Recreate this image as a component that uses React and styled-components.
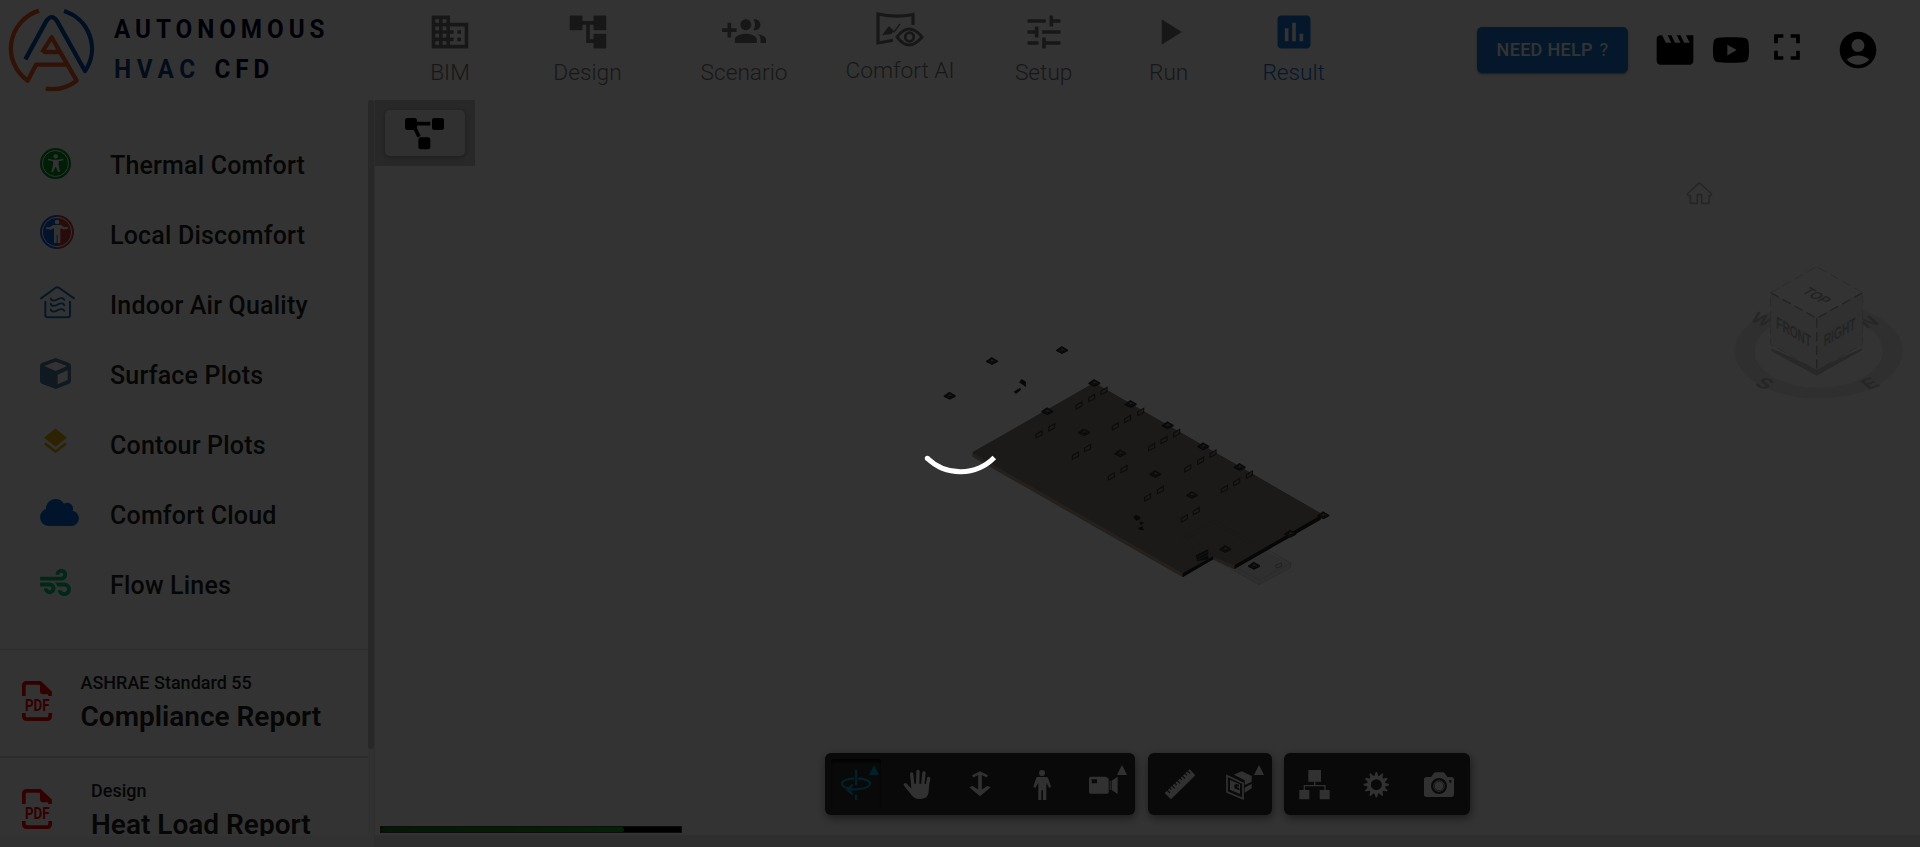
import React from "react";
import styled, { createGlobalStyle } from "styled-components";
import {
  MdBusiness, MdAccountTree, MdTune, MdPlayArrow, MdAssessment,
  MdMovie, MdFullscreen, MdAccountCircle, MdLayers,
} from "react-icons/md";
import { FaYoutube, FaCloud, FaWind } from "react-icons/fa";

const GlobalStyle = createGlobalStyle`
  * { box-sizing: border-box; }
  html, body { margin: 0; height: 100%; overflow: hidden; background: #fff; }
  body { font-family: Roboto, "Liberation Sans", sans-serif; color: #212121; }
  svg { display: block; flex: none; overflow: visible; }
`;

const Page = styled.div`
  width: 1920px;
  height: 847px;
  display: flex;
  flex-direction: column;
  background: #fff;
  overflow: hidden;
`;

/* ---------- header ---------- */
const Header = styled.header`
  height: 100px;
  flex: none;
  display: flex;
`;
const Brand = styled.div`
  width: 381.25px;
  flex: none;
  display: flex;
  padding: 8px 0 0 8px;
`;
const BrandText = styled.div`
  margin-left: 19px;
  padding-top: 1px;
  display: flex;
  flex-direction: column;
  font-size: 25.5px;
  font-weight: 700;
  line-height: 40px;
  letter-spacing: 5.2px;
  color: #00002c;
  white-space: nowrap;
`;
const BrandLine = styled.div`
  height: 40px;
  transform-origin: left;
  transform: scaleX(0.95);
`;
const BrandBlue = styled.span`
  color: #103c80;
  letter-spacing: 6px;
  margin-right: 3px;
`;
const Nav = styled.nav`
  display: flex;
  flex: 1;
`;
const NavItem = styled.div`
  width: ${(p) => p.$w}px;
  flex: none;
  display: flex;
  flex-direction: column;
  align-items: center;
  gap: ${(p) => (p.$raised ? 10 : 5)}px;
  padding-top: ${(p) => (p.$raised ? 12 : 10)}px;
  color: ${(p) => (p.$active ? "#1976d2" : "#757575")};
`;
const NavLabel = styled.span`
  font-size: 22.7px;
  font-weight: 350;
  line-height: 28px;
  white-space: nowrap;
`;
const Actions = styled.div`
  width: 443px;
  flex: none;
  display: flex;
  align-items: flex-start;
`;
const HelpButton = styled.button`
  margin-top: 27px;
  width: 151px;
  height: 46px;
  border: 0;
  border-radius: 5px;
  background: #1976d2;
  color: #fff;
  font: 500 18px/46px Roboto, sans-serif;
  letter-spacing: 0.3px;
  padding: 0;
  white-space: nowrap;
  box-shadow: 0 3px 1px -2px rgba(0,0,0,.2), 0 2px 2px rgba(0,0,0,.14), 0 1px 5px rgba(0,0,0,.12);
`;
const HelpMark = styled.span`
  font-weight: 400;
  margin-left: 2px;
`;
const ActionIcon = styled.span`
  margin: ${(p) => p.$top}px 0 0 ${(p) => p.$gap}px;
  color: #000;
`;

/* ---------- body ---------- */
const Body = styled.div`
  display: flex;
  flex: 1;
  min-height: 0;
`;
const Side = styled.aside`
  width: 375px;
  flex: none;
  display: flex;
  flex-direction: column;
  border-right: 1px solid #e4e4e4;
  background: #f5f5f5;
`;
const SideScroll = styled.div`
  height: 736px;
  display: flex;
  overflow: hidden;
  background: #fff;
`;
const SideContent = styled.div`
  width: 368px;
  flex: none;
`;
const ScrollTrack = styled.div`
  width: 6px;
  background: #f5f5f5;
`;
const ScrollThumb = styled.div`
  height: 649px;
  border-radius: 3px;
  background: #c8c8c8;
`;
const Menu = styled.div`
  height: 550px;
  padding-top: 30px;
  border-bottom: 1px solid #dcdcdc;
`;
const MenuRow = styled.div`
  height: 70px;
  display: flex;
  align-items: center;
  padding-left: 40px;
`;
const MenuIcon = styled.span`
  width: 70px;
  flex: none;
  padding-bottom: ${(p) => p.$lift}px;
  color: ${(p) => p.$color};
`;
const MenuLabel = styled.span`
  font-size: 25px;
  font-weight: 500;
  letter-spacing: 0.19px;
  line-height: 30px;
  padding-top: 1px;
  white-space: nowrap;
`;
const CloudIcon = styled(FaCloud)`
  width: 39px;
  height: 31px;
`;
const Report = styled.div`
  height: 108px;
  display: flex;
  padding: 0 0 0 22px;
  border-bottom: 2px solid #dcdcdc;
`;
const ReportIcon = styled.span`
  width: ${(p) => p.$w}px;
  flex: none;
  padding-top: 31px;
`;
const ReportText = styled.div`
  padding-top: 21px;
  white-space: nowrap;
`;
const ReportKind = styled.div`
  font-size: 18px;
  font-weight: 500;
  line-height: 24px;
`;
const ReportName = styled.div`
  font-size: 28px;
  font-weight: 600;
  line-height: 36px;
  margin-top: 4px;
`;

/* ---------- viewer ---------- */
const Viewer = styled.main`
  flex: 1;
  display: flex;
  flex-direction: column;
  background: #e4e4e4;
`;
const Stage = styled.div`
  position: relative;
  height: 735px;
  background: #fff;
`;
const TreePanel = styled.div`
  width: 100px;
  height: 66px;
  padding: 10px;
  background: #c6c6c6;
`;
const TreeButton = styled.div`
  width: 80px;
  height: 46px;
  padding: 8px 0 0 20px;
  border-radius: 5px;
  background: #f0f0f0;
  box-shadow: 0 1px 4px rgba(0,0,0,.3);
`;
const Placed = styled.div`
  position: absolute;
  left: ${(p) => p.$x}px;
  top: ${(p) => p.$y}px;
`;
const Toolbar = styled.div`
  position: absolute;
  left: 450px;
  top: 653px;
  display: flex;
  gap: 12.5px;
`;
const ToolGroup = styled.div`
  display: flex;
  height: 62px;
  border-radius: 6px;
  background: #2f2f2f;
  box-shadow: 1px 3px 10px rgba(0,0,0,.5);
`;
const ToolButton = styled.div`
  position: relative;
  width: 62px;
  height: 62px;
  padding-top: 2px;
  display: flex;
  align-items: center;
  justify-content: center;
  color: ${(p) => (p.$active ? "#00a5dc" : "#f4f4f4")};
`;
const ActiveWell = styled.div`
  position: absolute;
  inset: 6px;
  border-radius: 3px;
  box-shadow: inset 0 3px 3px #0c0c0c;
`;
const Caret = styled.span`
  position: absolute;
  right: 8px;
  top: 12px;
  border: 5px solid transparent;
  border-top: 0;
  border-bottom: 10px solid currentColor;
`;
const Progress = styled.div`
  position: absolute;
  left: 5px;
  top: 726px;
  width: 302px;
  height: 7px;
  border: 1px solid #444;
  background: #000;
`;
const ProgressFill = styled.div`
  width: 243px;
  height: 5px;
  border-radius: 3px;
  background: linear-gradient(90deg, #107a14, #14a81c);
`;

/* ---------- loading layer ---------- */
const Backdrop = styled.div`
  position: fixed;
  inset: 0;
  display: flex;
  align-items: center;
  justify-content: center;
  background: rgba(0,0,0,.8);
`;

const Spinner = () => (
  <svg width="100" height="100" viewBox="0 0 100 100" fill="none">
    <path d="M17.300 84.200A47.500 47.500 0 0 0 84.300 83.500" stroke="#fff" strokeWidth="5" />
    <circle cx="17.300" cy="84.200" r="2.500" fill="#fff" />
  </svg>
);

const Logo = () => (
  <svg width="87" height="84" viewBox="24 24 261 252" fill="none" strokeWidth="13" strokeLinejoin="round">
    <path stroke="#f05a1e" d="M117 32A121 119 0 0 0 83 242L108 194H198M126 157L155 112L230 242A121 119 0 0 1 137 266M130 156H176" />
    <path stroke="#0050a8" d="M76 178L138 65Q155 38 172 65L255 213A121 119 0 0 0 192 33" />
  </svg>
);

const GroupIcon = () => (
  <svg width="44" height="44" viewBox="0 0 24 24" fill="currentColor">
    <path d="M8 10H5V7H3v3H0v2h3v3h2v-3h3v-2zm10 1c1.660 0 2.990-1.340 2.990-3S19.660 5 18 5c-.32 0-.63.05-.91.14.57.81.9 1.790.9 2.860s-.34 2.040-.9 2.860c.28.09.59.14.91.14zm-5 0c1.660 0 2.990-1.340 2.990-3S14.660 5 13 5c-1.660 0-3 1.340-3 3s1.340 3 3 3zm6.620 2.160c.83.73 1.380 1.660 1.380 2.840v2h3v-2c0-1.540-2.370-2.490-4.380-2.840zM13 13c-2 0-6 1-6 3v2h12v-2c0-2-4-3-6-3z" />
  </svg>
);

const ComfortIcon = () => (
  <svg width="48" height="35" viewBox="0 0 48 35" fill="none" stroke="currentColor" strokeWidth="3.200">
    <path d="M37 13V2.500Q20 6 2 2V31Q9 30 17 28.300" />
    <path d="M7 23L13 15L18 20L24 12" strokeWidth="1.300" />
    <path d="M7 23L13 15L17 19L16 22Z" fill="currentColor" stroke="none" />
    <path d="M21 25Q33 9 46 25Q33 41 21 25Z" strokeWidth="3" />
    <circle cx="33.500" cy="25" r="4.300" strokeWidth="2.800" />
  </svg>
);

const ThermalIcon = () => (
  <svg width="31" height="31" viewBox="0 0 93 93">
    <circle cx="46.500" cy="46.500" r="46.500" fill="#00901c" />
    <circle cx="46.500" cy="46.500" r="39" fill="none" stroke="#fff" strokeWidth="3" />
    <circle cx="47" cy="25" r="6.500" fill="#fff" />
    <path fill="#fff" d="M24 32L40 35H54L70 32V37L56 40V52L60 72H54L48 57H46L39 72H34L39 52V40L24 37Z" />
  </svg>
);
const LocalIcon = () => (
  <svg width="34" height="34" viewBox="0 0 102 102">
    <path d="M51 0A51 51 0 0 0 51 102Z" fill="#1060dc" />
    <path d="M51 0A51 51 0 0 1 51 102Z" fill="#c83a40" />
    <circle cx="51" cy="51" r="44" fill="none" stroke="#fff" strokeWidth="3" />
    <circle cx="51" cy="21" r="7" fill="#fff" />
    <path fill="#fff" d="M39 30H63L72 37L84 36V41L70 43L61 40V84H53V60H50V84H42V40L32 44L18 41V37L30 37Z" />
  </svg>
);
const AirIcon = () => (
  <svg width="35" height="33" viewBox="0 0 105 99" fill="none" stroke="#1272c8" strokeWidth="6" strokeLinecap="round" strokeLinejoin="round">
    <path d="M3 37L46 6Q52 1 58 6L102 37M16 47V87Q16 94 23 94H83Q90 94 90 87V47" />
    <path strokeWidth="5.500" d="M32 37C35 48 48 43 54 39C64 34 71 36 73 42M32 53C35 64 48 59 54 55C64 50 71 52 73 58M32 70C35 81 48 76 54 72C64 67 71 69 73 75" />
  </svg>
);
const CubeIcon = () => (
  <svg width="31" height="31" viewBox="0 0 93 93">
    <path fillRule="evenodd" fill="#587ca2" d="M47 0L88 15Q93 18 93 24V68Q93 74 88 77L47 93L5 77Q0 74 0 68V24Q0 18 5 15ZM47 11L13 24L47 39L81 24ZM83 37L53 50V79L83 66Z" />
  </svg>
);
const PdfIcon = () => (
  <svg width="30" height="40" viewBox="0 0 90 120" fill="none" stroke="#ff0000" strokeWidth="11">
    <path d="M5.500 45V15Q5.500 5.500 15 5.500H54L84 34V45M5.500 96V105Q5.500 114.500 15 114.500H75Q84.500 114.500 84.500 105V96" />
    <path d="M54 3L88 36V40H63Q54 40 54 31Z" fill="#ff0000" stroke="none" />
    <text x="9" y="90" fontSize="50" fontWeight="700" fill="#ff0000" stroke="none" textLength="74" lengthAdjust="spacingAndGlyphs" fontFamily="Roboto, sans-serif">PDF</text>
  </svg>
);
const TreeIcon = () => (
  <svg width="39" height="32" viewBox="0 0 117 96">
    <path d="M20 17H76M26 22L42 56" stroke="#000" strokeWidth="11" />
    <rect width="36" height="36" rx="7" y="0" />
    <rect width="36" height="36" rx="7" x="81" y="0" />
    <rect width="36" height="36" rx="7" x="40" y="58" />
  </svg>
);

const edgeTiles = [[486, 60], [276, 93], [149, 197], [442, 244], [583, 159], [692, 222], [803, 286], [910, 349], [1019, 411], [1270, 556], [1062, 707], [1171, 611]];
const floorTiles = [[552, 307], [661, 370], [766, 432], [876, 495], [976, 657]];
const vents = [[612, 183], [575, 204], [537, 226], [455, 292], [417, 313], [722, 246], [683, 267], [646, 289], [563, 354], [526, 377], [830, 309], [792, 330], [755, 351], [672, 417], [634, 439], [939, 371], [902, 392], [863, 415], [781, 480], [743, 502], [1048, 434], [1010, 456], [973, 477], [889, 543], [853, 565]];

const Tile = ({ x, y, fill }) => (
  <g>
    <path d={`M${x - 18} ${y}L${x - 1} ${y - 12}L${x + 18} ${y - 1}V${y + 3}L${x} ${y + 12}L${x - 18} ${y + 3}Z`} fill={fill} />
    <path d={`M${x - 10} ${y}L${x} ${y - 6}L${x + 11} ${y}L${x} ${y + 7}Z`} fill="#666462" />
    <path d={`M${x - 7} ${y - 1}h6v5M${x} ${y + 3}h6`} stroke="#181818" fill="none" strokeWidth="3" />
    <path d={`M${x - 3} ${y - 1}h5`} stroke="#b8b8b8" strokeWidth="3" />
  </g>
);

const Model = () => (
  <svg width="450" height="270" viewBox="0 0 1350 810">
    <path fill="#8c8074" d="M218 368L583 158L1270 555V562L1003 717L940 688L848 741L218 380Z" />
    <path fill="#b4a292" d="M218 369L848 729V741L218 380Z" />
    <path fill="#8b837b" d="M218 366L583 158L1270 554L1003 706L940 678L848 730Z" />
    <path fill="#202020" d="M848 730L940 678V688L848 742ZM1003 706L1262 556V569L1003 718Z" />
    <path fill="#aaa097" d="M940 680L1003 706V718L940 688Z" />
    <path fill="#c0c0c0" fillOpacity=".3" d="M1003 718L1096 664L1172 698V712L1078 764L1003 722Z" />
    <path fill="none" stroke="#555" strokeOpacity=".35" strokeWidth="2" d="M848 624L940 569L1172 698V712L1078 764L940 688M848 624V636L900 664M858 628L940 580L1090 664" />
    <path fill="none" stroke="#888" strokeOpacity=".4" strokeWidth="2" d="M1010 714L1078 750L1172 700M1078 750V764" />
    {vents.map(([x, y]) => (
      <path key={`${x}-${y}`} d={`M${x - 9} ${y}L${x + 9} ${y - 11}V${y + 2}L${x - 9} ${y + 11}Z`} fill="none" stroke="#3a3836" strokeWidth="3.500" />
    ))}
    {edgeTiles.map(([x, y]) => <Tile key={`${x}-${y}`} x={x} y={y} fill="#2b2b2b" />)}
    {floorTiles.map(([x, y]) => <Tile key={`${x}-${y}`} x={x} y={y} fill="#383736" />)}
    <g fill="#292929">
      <path d="M357 157L365 147L378 155V172L368 164Z" />
      <path d="M341 185L361 173L363 179L348 192Z" />
      <path d="M700 560L708 554L721 560V568L708 572ZM718 579L725 574L731 579L724 586ZM713 594L728 589L731 601L720 600Z" />
      <path d="M887 676L925 657V688L891 694Z" />
    </g>
    <path d="M890 682L928 663M893 689L928 673" stroke="#808080" strokeWidth="2" />
    <path d="M890 641L907 634V646L895 652ZM1127 705L1144 699V710L1130 714Z" fill="none" stroke="#777" strokeWidth="2" />
  </svg>
);

const ViewCube = () => (
  <svg width="180" height="145" viewBox="210 310 540 435" fontFamily='"Liberation Sans", sans-serif' fontWeight="700">
    <path fillRule="evenodd" fill="#ebebeb" d="M223 574A253 143 0 1 0 729 574A253 143 0 1 0 223 574ZM284 574A192 110 0 1 1 668 574A192 110 0 1 1 284 574Z" />
    <g fill="#bcbcbc" fontSize="64" textAnchor="middle">
      <text transform="matrix(.8 .35 -.6 .6 292 492)">W</text>
      <text transform="matrix(.87 -.35 .65 .6 640 500)">N</text>
      <text transform="matrix(.87 .35 -.65 .6 300 684)">S</text>
      <text transform="matrix(.87 -.35 .65 .6 644 684)">E</text>
    </g>
    <path fill="#c6c6c6" d="M334 566L470 628L606 566V572L470 648L334 574Z" />
    <path fill="#fcfcfc" d="M470 321L608 399L470 476L332 399Z" />
    <path fill="#f3f3f3" d="M332 399L470 476V632L332 554Z" />
    <path fill="#efefef" d="M608 399L470 476V632L608 554Z" />
    <path fill="none" stroke="#acacac" strokeWidth="4" strokeDasharray="28 13" d="M332 399L470 476L608 399M470 476V632" />
    <path fill="none" stroke="#c8c8c8" strokeWidth="2.500" strokeDasharray="28 13" d="M332 399L470 321L608 399V554L470 632L332 554V399" />
    <g fill="#b0b0b0" textAnchor="middle">
      <text fontSize="52" textLength="86" lengthAdjust="spacingAndGlyphs" transform="matrix(.78 .44 -.75 .43 457 416)">TOP</text>
      <text fontSize="50" textLength="120" lengthAdjust="spacingAndGlyphs" transform="matrix(.87 .49 0 1 401 534)">FRONT</text>
      <text fontSize="50" textLength="110" lengthAdjust="spacingAndGlyphs" transform="matrix(.87 -.49 0 1 539 534)">RIGHT</text>
    </g>
  </svg>
);
const HomeIcon = () => (
  <svg width="27" height="23" viewBox="0 0 81 69" fill="none" stroke="#bababa" strokeWidth="5" strokeLinejoin="round">
    <path d="M13 41H7L4 36L37 5Q40 2 43 5L77 36L74 41H69V64H47V38H34V64H13Z" />
  </svg>
);

/* viewer tool icons, each on a 102-unit square */
const Tool = ({ children }) => (
  <svg width="34" height="34" viewBox="0 0 102 102" fill="currentColor">{children}</svg>
);
const OrbitIcon = () => (
  <Tool>
    <path fill="none" stroke="currentColor" strokeWidth="6.500" d="M51 5V51M51 80V96M38 62C20 60 9 55 9 47C9 38 28 32 45 32M57 32C75 32 93 38 93 47C93 58 72 64 27 65M41 50L25 65L41 79" />
  </Tool>
);
const HandIcon = () => (
  <Tool>
    <g fill="none" stroke="currentColor" strokeWidth="10" strokeLinecap="round">
      <path d="M36 56L32 18M50 52L51 10M65 52L69 15M78 58L83 31M28 68L13 50" />
    </g>
    <path d="M31 47L83 48C86 84 78 93 55 93C36 93 29 78 17 60L26 56L32 62Z" />
  </Tool>
);
const ZoomIcon = () => (
  <Tool>
    <path fill="none" stroke="currentColor" strokeWidth="8" d="M29 25L51 14L73 25" />
    <path fill="none" stroke="currentColor" strokeWidth="11" d="M51 15V71" />
    <path d="M19 58L29 54L51 68L73 54L83 58L51 85Z" />
  </Tool>
);
const PersonIcon = () => (
  <Tool>
    <circle cx="51" cy="15" r="9" />
    <path d="M37 27H65Q69 28 70 32L78 56L73 60L64 44V96H54V67H49V96H40V44L31 60L25 56L33 32Q34 28 37 27Z" />
  </Tool>
);
const VideoIcon = () => (
  <Tool>
    <path fillRule="evenodd" d="M11 26H55Q63 27 65 33V72Q65 77 60 77H11Q6 77 6 72V31Q6 26 11 26ZM14 34V46H30V34ZM68 38H71V66H68ZM74 38L92 26V78L74 66Z" />
  </Tool>
);
const RulerIcon = () => (
  <Tool>
    <path d="M8 75L83 4L100 22L27 94Z" />
    <path stroke="#2f2f2f" strokeWidth="3.500" d="M15 66L24 75M22 59L28 65M30 52L38 61M38 45L44 51M45 37L54 46M54 30L60 36M61 23L69 32M69 16L75 22M76 9L85 17" />
  </Tool>
);
const SectionIcon = () => (
  <Tool>
    <path fill="none" stroke="currentColor" strokeWidth="5" d="M9 23L57 46V92L9 72Z" />
    <path d="M30 20L53 10L83 24V41L62 51V37ZM62 59L83 47V61L62 74Z" />
    <path fillRule="evenodd" d="M18 36L48 49V78L18 65ZM31 50V61L46 67V61L40 58V54L45 56V50L38 48Z" />
  </Tool>
);
const HierarchyIcon = () => (
  <Tool>
    <path d="M31 6H69V41H31ZM4 66H34V94H4ZM65 66H95V94H65Z" />
    <path fill="none" stroke="currentColor" strokeWidth="4" d="M50 40V53M19 67V53H81V67" />
  </Tool>
);
const GearIcon = () => (
  <Tool>
    <circle cx="49" cy="50" r="22" fill="none" stroke="currentColor" strokeWidth="11" />
    {Array.from({ length: 12 }, (_, i) => (
      <path key={i} transform={`rotate(${i * 30} 49 50)`} d="M43 25L47 12H51L55 25Z" />
    ))}
  </Tool>
);
const CameraIcon = () => (
  <Tool>
    <path fillRule="evenodd" d="M14 27H27L36 15Q38 13 41 13H63Q66 13 68 16L76 27H88Q96 27 96 35V79Q96 87 88 87H14Q6 87 6 79V35Q6 27 14 27ZM51 30A24 24 0 1 0 51 78A24 24 0 1 0 51 30ZM85 36A4 4 0 1 0 85 44A4 4 0 1 0 85 36Z" />
    <circle cx="51" cy="54" r="17" />
    <circle cx="51" cy="54" r="14" fill="none" stroke="#777" strokeWidth="3" />
  </Tool>
);

const navItems = [
  { label: "BIM", w: 137.5, icon: MdBusiness },
  { label: "Design", w: 137.5, icon: MdAccountTree },
  { label: "Scenario", w: 175.5, icon: GroupIcon },
  { label: "Comfort AI", w: 136.5, icon: ComfortIcon, raised: true },
  { label: "Setup", w: 150.9, icon: MdTune },
  { label: "Run", w: 99.1, icon: MdPlayArrow },
  { label: "Result", w: 150.9, icon: MdAssessment, active: true },
];
const menuItems = [
  { label: "Thermal Comfort", icon: <ThermalIcon />, lift: 3 },
  { label: "Local Discomfort", icon: <LocalIcon />, lift: 6 },
  { label: "Indoor Air Quality", icon: <AirIcon />, lift: 6 },
  { label: "Surface Plots", icon: <CubeIcon />, lift: 3 },
  { label: "Contour Plots", icon: <MdLayers size={31} />, color: "#e0aa08", lift: 7 },
  { label: "Comfort Cloud", icon: <CloudIcon />, color: "#0066d4", lift: 5 },
  { label: "Flow Lines", icon: <FaWind size={31} />, color: "#00c078", lift: 5 },
];
const toolGroups = [
  [
    { icon: OrbitIcon, active: true, more: true },
    { icon: HandIcon },
    { icon: ZoomIcon },
    { icon: PersonIcon },
    { icon: VideoIcon, more: true },
  ],
  [{ icon: RulerIcon }, { icon: SectionIcon, more: true }],
  [{ icon: HierarchyIcon }, { icon: GearIcon }, { icon: CameraIcon }],
];

export default function App() {
  return (
    <>
      <GlobalStyle />
      <Page>
        <Header>
          <Brand>
            <Logo />
            <BrandText>
              <BrandLine>AUTONOMOUS</BrandLine>
              <BrandLine><BrandBlue>HVAC</BrandBlue> CFD</BrandLine>
            </BrandText>
          </Brand>
          <Nav>
            {navItems.map(({ label, w, icon: Icon, raised, active }) => (
              <NavItem key={label} $w={w} $raised={raised} $active={active}>
                <Icon size={44} />
                <NavLabel>{label}</NavLabel>
              </NavItem>
            ))}
          </Nav>
          <Actions>
            <HelpButton>NEED HELP <HelpMark>?</HelpMark></HelpButton>
            <ActionIcon $top={28} $gap={25}><MdMovie size={44} /></ActionIcon>
            <ActionIcon $top={31} $gap={15}><FaYoutube size={38} /></ActionIcon>
            <ActionIcon $top={25} $gap={15}><MdFullscreen size={44} /></ActionIcon>
            <ActionIcon $top={28} $gap={27}><MdAccountCircle size={44} /></ActionIcon>
          </Actions>
        </Header>
        <Body>
          <Side>
            <SideScroll>
              <SideContent>
                <Menu>
                  {menuItems.map((m) => (
                    <MenuRow key={m.label}>
                      <MenuIcon $color={m.color} $lift={m.lift}>{m.icon}</MenuIcon>
                      <MenuLabel>{m.label}</MenuLabel>
                    </MenuRow>
                  ))}
                </Menu>
                <Report>
                  <ReportIcon $w={58.5}><PdfIcon /></ReportIcon>
                  <ReportText>
                    <ReportKind>ASHRAE Standard 55</ReportKind>
                    <ReportName>Compliance Report</ReportName>
                  </ReportText>
                </Report>
                <Report>
                  <ReportIcon $w={69}><PdfIcon /></ReportIcon>
                  <ReportText>
                    <ReportKind>Design</ReportKind>
                    <ReportName>Heat Load Report</ReportName>
                  </ReportText>
                </Report>
              </SideContent>
              <ScrollTrack><ScrollThumb /></ScrollTrack>
            </SideScroll>
          </Side>
          <Viewer>
            <Stage>
              <TreePanel><TreeButton><TreeIcon /></TreeButton></TreePanel>
              <Placed $x={525} $y={230}><Model /></Placed>
              <Placed $x={1310.500} $y={82}><HomeIcon /></Placed>
              <Placed $x={1355} $y={163.3}><ViewCube /></Placed>
              <Toolbar>
                {toolGroups.map((group, g) => (
                  <ToolGroup key={g}>
                    {group.map(({ icon: Icon, active, more }, i) => (
                      <ToolButton key={i} $active={active}>
                        {active && <ActiveWell />}
                        <Icon />
                        {more && <Caret />}
                      </ToolButton>
                    ))}
                  </ToolGroup>
                ))}
              </Toolbar>
              <Progress><ProgressFill /></Progress>
            </Stage>
          </Viewer>
        </Body>
      </Page>
      <Backdrop><Spinner /></Backdrop>
    </>
  );
}
